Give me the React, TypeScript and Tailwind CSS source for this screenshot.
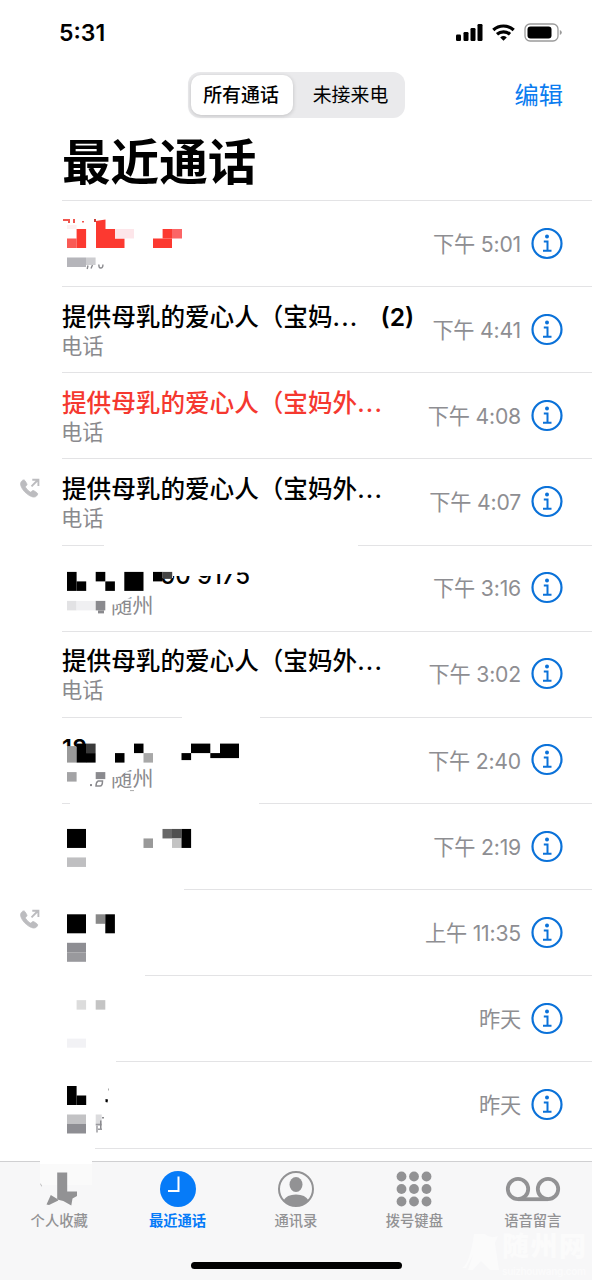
import type { ReactNode } from "react";

type Cell = [x: number, y: number, w: number, h: number, fill: string];

interface Call {
  name?: string;
  label?: string;
  count?: number;
  time: string;
  missed?: boolean;
  outgoing?: boolean;
}

const CALLS: Call[] = [
  { time: "下午 5:01", missed: true },
  { name: "提供母乳的爱心人（宝妈", label: "电话", count: 2, time: "下午 4:41" },
  { name: "提供母乳的爱心人（宝妈外", label: "电话", time: "下午 4:08", missed: true },
  { name: "提供母乳的爱心人（宝妈外", label: "电话", time: "下午 4:07", outgoing: true },
  { time: "下午 3:16" },
  { name: "提供母乳的爱心人（宝妈外", label: "电话", time: "下午 3:02" },
  { time: "下午 2:40" },
  { time: "下午 2:19" },
  { time: "上午 11:35", outgoing: true },
  { time: "昨天" },
  { time: "昨天" },
];

const ROW_HEIGHT = 86.15;
const LIST_TOP = 200;

// Pixelated names, in screen coordinates. White cells rub out the divider above the row.
const MOSAIC: Record<number, Cell[]> = {
  0: [
    [63, 219, 7, 2, "#f0564f"],
    [68, 221, 2, 2, "#f0564f"],
    [73, 219, 2, 4, "#f0564f"],
    [82, 221, 2, 1.5, "#f0564f"],
    [94, 219, 2, 3, "#c9403a"],
    [67, 225, 9.6, 4, "#fdf0f1"],
    [67, 238.5, 9.6, 9.5, "#f95a55"],
    [76.6, 229, 9.5, 19, "#fc3930"],
    [96, 229, 19, 19, "#fc3930"],
    [115, 238.5, 9.5, 9.5, "#fc3930"],
    [115, 229, 19, 9.5, "#fde6ea"],
    [153, 238.5, 19, 9.5, "#fc3930"],
    [162.6, 229, 9.5, 9.5, "#fc3930"],
    [172, 229, 10, 9.5, "#fb6566"],
    [67, 257.5, 19, 9.5, "#b5b5ba"],
    [86, 257.5, 9.6, 7.5, "#cdcdd0"],
  ],
  4: [
    [104, 543, 254, 4, "#fff"],
    [67, 571.5, 9.6, 19, "#000"],
    [76.6, 581, 9.6, 9.5, "#000"],
    [95.7, 571.5, 9.6, 9.5, "#000"],
    [105.3, 581, 9.6, 9.5, "#000"],
    [124.3, 571.5, 19.2, 19, "#000"],
    [153, 571.5, 9.6, 9.5, "#000"],
    [162.6, 571.5, 9.6, 7, "#444"],
    [67, 600.5, 9.6, 9.5, "#e2e2e4"],
    [76.6, 600.5, 19, 9.5, "#f0f0f2"],
    [95.7, 600.5, 9.6, 9.5, "#8a8a8e"],
    [98, 610, 6, 3, "#8a8a8e"],
  ],
  6: [
    [182, 715, 78, 4, "#fff"],
    [67, 746, 9.6, 16.5, "#999"],
    [76.6, 743.5, 9.6, 19, "#000"],
    [86, 743.5, 9.6, 9.5, "#3a3a3a"],
    [86, 753, 9.6, 9.5, "#000"],
    [115, 753, 9.5, 9.5, "#000"],
    [134, 743.5, 9.5, 9.5, "#000"],
    [143.5, 753, 9.5, 9.5, "#a8a8a8"],
    [181.5, 753, 9.6, 7, "#000"],
    [191, 743.5, 19.3, 9.5, "#000"],
    [210.3, 753, 10, 5, "#000"],
    [220, 743.5, 19, 14.5, "#000"],
    [67, 772, 9.6, 9.5, "#a3a3a5"],
    [95.7, 772, 9.6, 7, "#8a8a8e"],
    [90, 784, 2, 2, "#8a8a8e"],
    [130, 790, 4, 1, "#aaa"],
  ],
  7: [
    [70, 801, 189, 4, "#fff"],
    [67, 829, 19, 19, "#000"],
    [143.5, 838.5, 9.5, 9.5, "#999"],
    [162.5, 829, 9.6, 9.5, "#686868"],
    [172, 829, 9.5, 9.5, "#505050"],
    [172, 838.5, 9.5, 9.5, "#c4c4c4"],
    [181.5, 829, 9.6, 19, "#000"],
    [67, 857.5, 19, 9.5, "#bfbfc1"],
  ],
  8: [
    [60, 887, 124, 4, "#fff"],
    [67, 914.5, 19, 19, "#000"],
    [95.7, 914.5, 9.6, 9.5, "#888"],
    [105.3, 914.5, 9.6, 19, "#000"],
    [67, 943, 19, 9.5, "#8e8e93"],
    [67, 952.5, 19, 9.5, "#99999d"],
  ],
  9: [
    [60, 973, 85, 4, "#fff"],
    [76.6, 1000.5, 9.5, 9.5, "#dcdcdc"],
    [95.7, 1000.5, 9.6, 9.5, "#c4c4c4"],
    [67, 1039, 19, 9, "#f2f2f5"],
  ],
  10: [
    [60, 1059, 56, 5, "#fff"],
    [67, 1086.5, 9.6, 19, "#000"],
    [76.6, 1096, 9.6, 9.5, "#000"],
    [108, 1089, 1, 2, "#aaa"],
    [67, 1115, 19, 9.5, "#c2c2c4"],
    [67, 1124.5, 19, 9.5, "#8e8e93"],
    [95.7, 1115, 6, 8.5, "#dcdcde"],
    [102, 1117.5, 2, 1.5, "#8a8a8e"],
    [95.7, 1124, 6, 2, "#9a9a9e"],
    [100, 1121, 1.5, 9, "#8a8a8e"],
    [96, 1126, 2, 7, "#b5b5b8"],
    [98, 1129, 4, 1.5, "#9a9a9e"],
  ],
};

// What is still readable of the text that was rubbed out
const REMNANTS: Record<number, ReactNode> = {
  0: (
    <>
      <path d="M96 221l9.5-1.500v10H96z" fill="#fc3930" />
      <path d="M88 265.500l-.8 3.500M92.500 265l-1.500 3.500M98.800 264.500q0 3.500 1.800 3.500 2.500 0 2.300-3.500" fill="none" stroke="#8a8a8e" strokeWidth="1.400" />
    </>
  ),
  4: (
    <>
      <text x="160" y="584" fontSize="24" fontWeight="500" textLength="90">00 9175</text>
      <text x="111" y="612.500" fontSize="21.300" fill="#8a8a8e">随州</text>
      <path d="M150 560h110v12h-25v1.500h-22v2h-40v2h-23zM108 592h24v4l-15 8h-9z" fill="#fff" />
    </>
  ),
  6: (
    <>
      <text x="62" y="756" fontSize="23.500" fontWeight="600">18</text>
      <path d="M60 746h7v14h-7zM76 747h12v12H76z" fill="#fff" />
      <text x="111" y="785.500" fontSize="21.300" fill="#8a8a8e">随州</text>
      <path d="M108 765h24v4l-15 8h-9z" fill="#fff" />
      <path d="M96 786q0-4 2-5h4.500q0 5-2.500 5z" fill="none" stroke="#8a8a8e" strokeWidth="1.500" />
    </>
  ),
  10: <path d="M105.500 1099.500l2.500.5-.5 3-2-.5z" />,
};

function Redaction({ index }: { index: number }) {
  if (!MOSAIC[index]) return null;
  const top = LIST_TOP + ROW_HEIGHT * index;
  return (
    <svg
      className="absolute left-0 top-0 h-full w-full overflow-visible"
      viewBox={`0 ${top} 592 ${ROW_HEIGHT}`}
      preserveAspectRatio="none"
    >
      {REMNANTS[index]}
      {MOSAIC[index].map(([x, y, w, h, fill]) => (
        <rect key={`${x}-${y}`} x={x} y={y} width={w} height={h} fill={fill} />
      ))}
    </svg>
  );
}

function InfoIcon() {
  return (
    <svg className="size-8 shrink-0" viewBox="0 0 32 32" fill="none" stroke="#0b72d9" strokeWidth="2.200">
      <circle cx="16" cy="15.500" r="14.500" />
      <circle cx="16" cy="8.500" r="2" fill="#0b72d9" stroke="none" />
      <path d="M12.800 13.500h3.700v9.200M12 22.800h8.500" strokeWidth="2" />
    </svg>
  );
}

function OutgoingIcon() {
  return (
    <svg className="size-5" viewBox="0 0 20 20" fill="#bcbcbf">
      <path d="M1.600 3.200C2.800 1.700 4.300 1.500 5 2.700l1.700 2.800c.5.900.3 1.500-.4 2.200l-.6.600c-.4.400-.3.700 0 1.200 1 1.700 2.500 3.200 4.300 4.400.5.300.8.300 1.200-.1l.6-.6c.7-.7 1.300-.9 2.200-.4l2.900 1.900c1.100.7 1 1.900-.3 3.200-1.800 1.800-4.300 1.400-7.600-.6C5.800 15.300 3 12.500 1.500 9.300.3 6.700.2 4.900 1.600 3.200z" stroke="#bcbcbf" strokeWidth="0.800" />
      <path d="M11.500 8.300l6.300-6.300M12.300 1.700h6.100v6.200" fill="none" stroke="#bcbcbf" strokeWidth="1.900" />
    </svg>
  );
}

function CallRow({ call, index }: { call: Call; index: number }) {
  return (
    <li className="relative flex h-[86.15px] shrink-0">
      <div className="w-[62px] shrink-0 pl-[19.500px] pt-[20px]">{call.outgoing && <OutgoingIcon />}</div>
      <div className="flex min-w-0 flex-1 items-center border-t border-[#e3e3e5] pr-[29px]">
        <div className="flex min-w-0 flex-1 flex-col pt-[2px]">
          <div
            className={`flex items-center gap-[22px] whitespace-nowrap text-[24.600px] font-medium leading-[30px] ${call.missed ? "text-[#f5382f]" : "text-black"}`}
          >
            {call.name && (
              <span>
                {call.name}
                <span className="tracking-[1.200px]">...</span>
              </span>
            )}
            {call.count && <span className="font-semibold">({call.count})</span>}
          </div>
          <div className="-ml-px text-[21.300px] leading-[28px] text-[#8a8a8e]">{call.label}</div>
        </div>
        <time className="mr-2.5 shrink-0 whitespace-nowrap pt-[2px] text-[21.200px] font-normal tracking-[-0.200px] text-[#8e8e92]">
          {call.time}
        </time>
        <InfoIcon />
      </div>
      <Redaction index={index} />
    </li>
  );
}

function StatusBar() {
  return (
    <div className="flex h-16 items-center justify-between pl-[59px] pr-[30px]">
      <span className="pt-[2px] text-[23px] font-semibold leading-none">5:31</span>
      <svg className="h-5 w-[107px]" viewBox="0 0 107 20">
        <rect x="1" y="12.500" width="5" height="6.500" rx="1.200" />
        <rect x="8.500" y="10" width="5" height="9" rx="1.200" />
        <rect x="15.500" y="6" width="5" height="13" rx="1.200" />
        <rect x="22.500" y="2" width="5" height="17" rx="1.200" />
        <g fill="none" stroke="#000" strokeWidth="3.200">
          <path d="M38.300 8a15 15 0 0 1 20.400 0" />
          <path d="M42 12.300a9.700 9.700 0 0 1 13 0" />
        </g>
        <path d="M45.200 15.500a5 5 0 0 1 6.600 0l-3.300 3.200z" />
        <rect x="70" y="2" width="33" height="17" rx="5" fill="none" stroke="#9a9a9a" strokeWidth="1.300" />
        <rect x="72.500" y="4.500" width="24" height="12" rx="3" />
        <path d="M104.800 8v5q2-.7 2-2.500t-2-2.500z" fill="#9a9a9a" />
      </svg>
    </div>
  );
}

function Header() {
  return (
    <header className="h-[136px]">
      <div className="grid grid-cols-[188px_217px_1fr] items-center pr-[29px] pt-2">
        <div />
        <div className="flex h-[46px] rounded-xl bg-[#eaeaec] p-[3px] text-[18.900px] leading-none">
          <div className="flex w-[102px] items-center justify-center rounded-[10px] bg-white pr-[2px] pt-[3px] font-medium shadow-[0_1px_4px_rgba(0,0,0,0.18)]">
            所有通话
          </div>
          <div className="flex flex-1 items-center justify-center pl-[6px] pt-[3px]">未接来电</div>
        </div>
        <button className="text-right text-[24.300px] leading-none text-[#0b7cf0]">编辑</button>
      </div>
      <h1 className="pl-[62px] pt-[16px] text-[48.600px] font-bold leading-[58px]">最近通话</h1>
    </header>
  );
}

const GRID = [5.5, 18, 30.5];

const TABS = [
  {
    label: "个人收藏",
    icon: (
      <>
        <path d="M-1-8h52v22H-1z" fill="#fafafa" />
        <path d="M-1-10h52v3H-1z" fill="#fff" />
        <path d="M16.200 1.500h10v19h9.800v4.500l-4.500 2.500-1.200 7-8-4.500-6.100-1.500z" />
        <path d="M9.800 24l6.500 4 1 1.500L8 34l-2.500-.5zM-1 12l1.500 2v2z" />
      </>
    ),
  },
  {
    label: "最近通话",
    active: true,
    icon: (
      <>
        <circle cx="18" cy="18" r="18" />
        <path d="M18.500 5.500v14.500H8" fill="none" stroke="#fff" strokeWidth="2" />
      </>
    ),
  },
  {
    label: "通讯录",
    icon: (
      <>
        <circle cx="18" cy="18" r="17" fill="none" stroke="currentColor" strokeWidth="2" />
        <ellipse cx="18" cy="13.500" rx="6.500" ry="7.500" />
        <path d="M5.500 29.500q3-6 12.500-6t12.500 6Q25 35 18 35T5.500 29.500z" />
      </>
    ),
  },
  {
    label: "拨号键盘",
    icon: GRID.flatMap((y) => GRID.map((x) => <circle key={`${x}-${y}`} cx={x} cy={y} r="4.900" />)),
  },
  {
    label: "语音留言",
    icon: (
      <g fill="none" stroke="currentColor" strokeWidth="3.800">
        <circle cx="3" cy="18" r="10.200" />
        <circle cx="33" cy="18" r="10.200" />
        <path d="M3 28.200h30" />
      </g>
    ),
  },
];

function Watermark() {
  return (
    <svg className="absolute bottom-0 right-0 h-[54px] w-[136px]" viewBox="0 0 136 54" fill="#fff" opacity="0.5">
      <path d="M6 42q8-5 12-34h11q5 5 13 2l-3 7 4 27h-9l-9-9-8 9h-5l5-15-7 13z" />
      <text x="46" y="30" fontSize="27" fontWeight="900" textLength="84">随州网</text>
      <text x="46" y="49" fontSize="10" fontWeight="600" textLength="84">suizhouwang.com</text>
    </svg>
  );
}

function TabBar() {
  return (
    <nav className="relative h-[119px] border-t border-[#d0d0d2] bg-[#f7f7f8]">
      <ul className="flex justify-between pt-[9px]">
        {TABS.map(({ label, icon, active }) => (
          <li key={label} className={`flex w-[118.400px] flex-col items-center ${active ? "text-[#067bf8]" : "text-[#929294]"}`}>
            <svg className="size-9 overflow-visible" viewBox="0 0 36 36" fill="currentColor">
              {icon}
            </svg>
            <span className={`mt-[4px] text-[14.300px] leading-[19px] ${active ? "font-bold" : "font-medium"}`}>{label}</span>
          </li>
        ))}
      </ul>
      <Watermark />
      <div className="absolute bottom-[11px] left-[191px] h-[7px] w-[211px] rounded-full bg-black" />
    </nav>
  );
}

export default function App() {
  return (
    <main className="flex h-[1280px] w-[592px] flex-col overflow-hidden bg-white font-['Inter','Noto_Sans_CJK_SC',sans-serif] text-black">
      <StatusBar />
      <Header />
      <ul className="flex h-[961px] flex-col overflow-hidden">
        {CALLS.map((call, index) => (
          <CallRow key={index} call={call} index={index} />
        ))}
        <li className="ml-[95px] h-px shrink-0 bg-[#e3e3e5]" />
      </ul>
      <TabBar />
    </main>
  );
}
